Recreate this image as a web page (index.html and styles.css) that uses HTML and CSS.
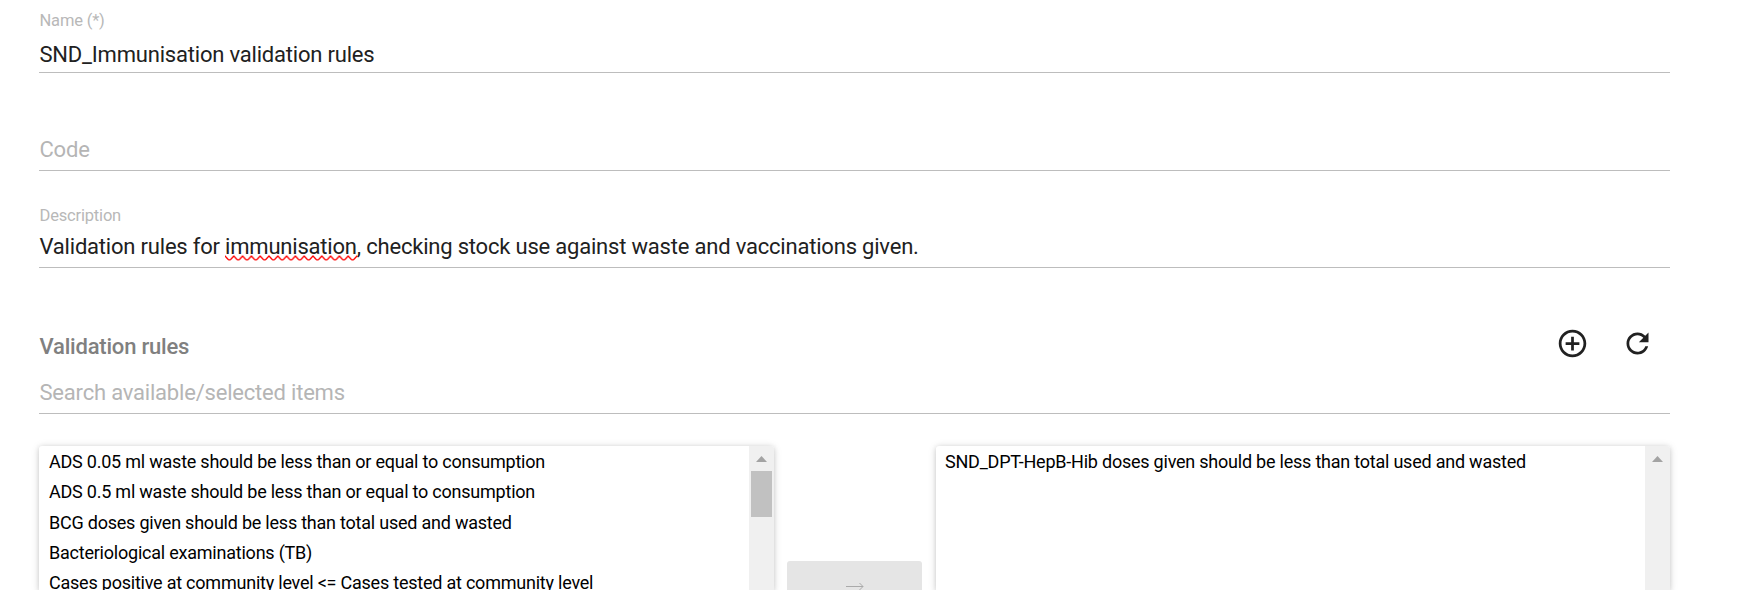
FILE: index.html
```
<!DOCTYPE html>
<html lang="en">
<head>
<meta charset="utf-8">
<title>Validation rule group</title>
<link rel="stylesheet" href="styles.css">
</head>
<body>
<main class="form">
  <div class="field field-name">
    <span class="label">Name (*)</span>
    <div class="value">SND_Immunisation validation rules</div>
  </div>
  <div class="field field-code">
    <div class="value placeholder">Code</div>
  </div>
  <div class="field field-description">
    <span class="label">Description</span>
    <div class="value">Validation rules for <span class="misspelt">immunisation<svg class="squiggle" width="132" height="6" viewBox="0 0 132 6"><defs><pattern id="wave" width="8.8" height="6" patternUnits="userSpaceOnUse"><path d="M-1 .1 0 1 3.2 4.4Q4.4 5.3 5.6 4.4L8.8 1 9.8.1" fill="none" stroke="#f00" stroke-width="1.3"/></pattern></defs><rect width="132" height="6" fill="url(#wave)"/></svg></span>, checking stock use against waste and vaccinations given.</div>
  </div>
  <header class="rules-header">
    <h2 class="title">Validation rules</h2>
    <div class="actions">
      <svg class="icon" viewBox="0 0 24 24"><path d="M13 7h-2v4H7v2h4v4h2v-4h4v-2h-4V7zm-1-5C6.480 2 2 6.480 2 12s4.480 10 10 10 10-4.480 10-10S17.520 2 12 2zm0 18c-4.410 0-8-3.590-8-8s3.590-8 8-8 8 3.590 8 8-3.590 8-8 8z"/></svg>
      <svg class="icon" viewBox="0 0 24 24"><path d="M17.650 6.350C16.200 4.900 14.210 4 12 4c-4.420 0-7.990 3.580-7.990 8s3.570 8 7.990 8c3.730 0 6.840-2.550 7.730-6h-2.080c-.820 2.330-3.040 4-5.650 4-3.310 0-6-2.690-6-6s2.690-6 6-6c1.660 0 3.140.690 4.220 1.780L13 11h7V4l-2.350 2.350z"/></svg>
    </div>
  </header>
  <div class="field field-search">
    <div class="value placeholder">Search available/selected items</div>
  </div>
  <div class="transfer">
    <section class="panel">
      <ul class="options">
        <li>ADS 0.05 ml waste should be less than or equal to consumption</li>
        <li>ADS 0.5 ml waste should be less than or equal to consumption</li>
        <li>BCG doses given should be less than total used and wasted</li>
        <li>Bacteriological examinations (TB)</li>
        <li>Cases positive at community level &lt;= Cases tested at community level</li>
      </ul>
      <div class="scrollbar"><span class="up"></span><span class="thumb"></span></div>
    </section>
    <div class="controls">
      <button class="move" disabled><svg width="18" height="8" viewBox="0 0 18 8" fill="none" stroke="#aaa"><path d="M0 4.500H17M13.500 1 17 4.500 13.500 8"/></svg></button>
    </div>
    <section class="panel">
      <ul class="options options-selected">
        <li>SND_DPT-HepB-Hib doses given should be less than total used and wasted</li>
      </ul>
      <div class="scrollbar"><span class="up"></span></div>
    </section>
  </div>
</main>
</body>
</html>
```
FILE: styles.css
```
* { box-sizing: border-box; }
body {
  margin: 0;
  height: 590px;
  overflow: hidden;
  background: #fff;
  font-family: Roboto, sans-serif;
  font-size: 22px;
  letter-spacing: -.2px;
  color: #212121;
}
.form { width: 1631px; margin-left: 39px; }
.field {
  display: flex;
  flex-direction: column;
  justify-content: flex-end;
  padding-left: .5px;
  border-bottom: 1px solid #bdbdbd;
}
.field-name { height: 73px; padding-bottom: 3px; }
.field-code { height: 98px; padding-bottom: 6px; }
.field-description { height: 97px; padding-bottom: 6px; }
.field-search { height: 49px; padding-bottom: 6px; }
.label { font-size: 16.5px; line-height: 20px; letter-spacing: -.18px; color: #b8b8b8; }
.field-name .label { margin-bottom: 10px; }
.field-description .label { margin-bottom: 7px; }
.value { line-height: 28px; white-space: nowrap; }
.placeholder { color: #b5b5b5; }
.misspelt { position: relative; }
.squiggle { position: absolute; left: 0; bottom: -2px; }
.rules-header {
  height: 97px;
  display: flex;
  justify-content: space-between;
  align-items: flex-end;
  padding: 0 16.5px 5px .5px;
}
.title { margin: 0 0 -1px; font-size: 22px; font-weight: 500; line-height: 28px; color: #808080; }
.actions { display: flex; gap: 32px; }
.icon { width: 33px; height: 33px; fill: #212121; }
.transfer { display: grid; grid-template-columns: 735px 135px 734px; column-gap: 13px; margin-top: 32px; height: 145px; }
.panel {
  display: flex;
  justify-content: space-between;
  overflow: hidden;
  border-radius: 3px 3px 0 0;
  box-shadow: 0 1px 8px rgba(0, 0, 0, .13), 0 1px 5px rgba(0, 0, 0, .13);
}
.panel:last-child { margin: 0 -1px 0 1px; }
.options { height: 144px; margin: 0; padding: 1px 0 0 10px; list-style: none; color: #000; font-size: 18px; line-height: 30.250px; letter-spacing: -.225px; white-space: nowrap; }
.options-selected { padding-left: 9px; }
.scrollbar { width: 25px; background: #f0f0f0; display: flex; flex-direction: column; align-items: center; padding-top: 10px; }
.up { width: 11px; height: 6px; background: #a3a3a3; clip-path: polygon(50% 0, 100% 100%, 0 100%); }
.thumb { width: 21px; height: 46px; margin-top: 9px; background: #c1c1c1; }
.controls { padding-top: 115px; }
.move { display: flex; justify-content: center; width: 135px; height: 29px; padding: 21px 0 0; border: 0; border-radius: 3px 3px 0 0; background: #e5e5e5; }
```
